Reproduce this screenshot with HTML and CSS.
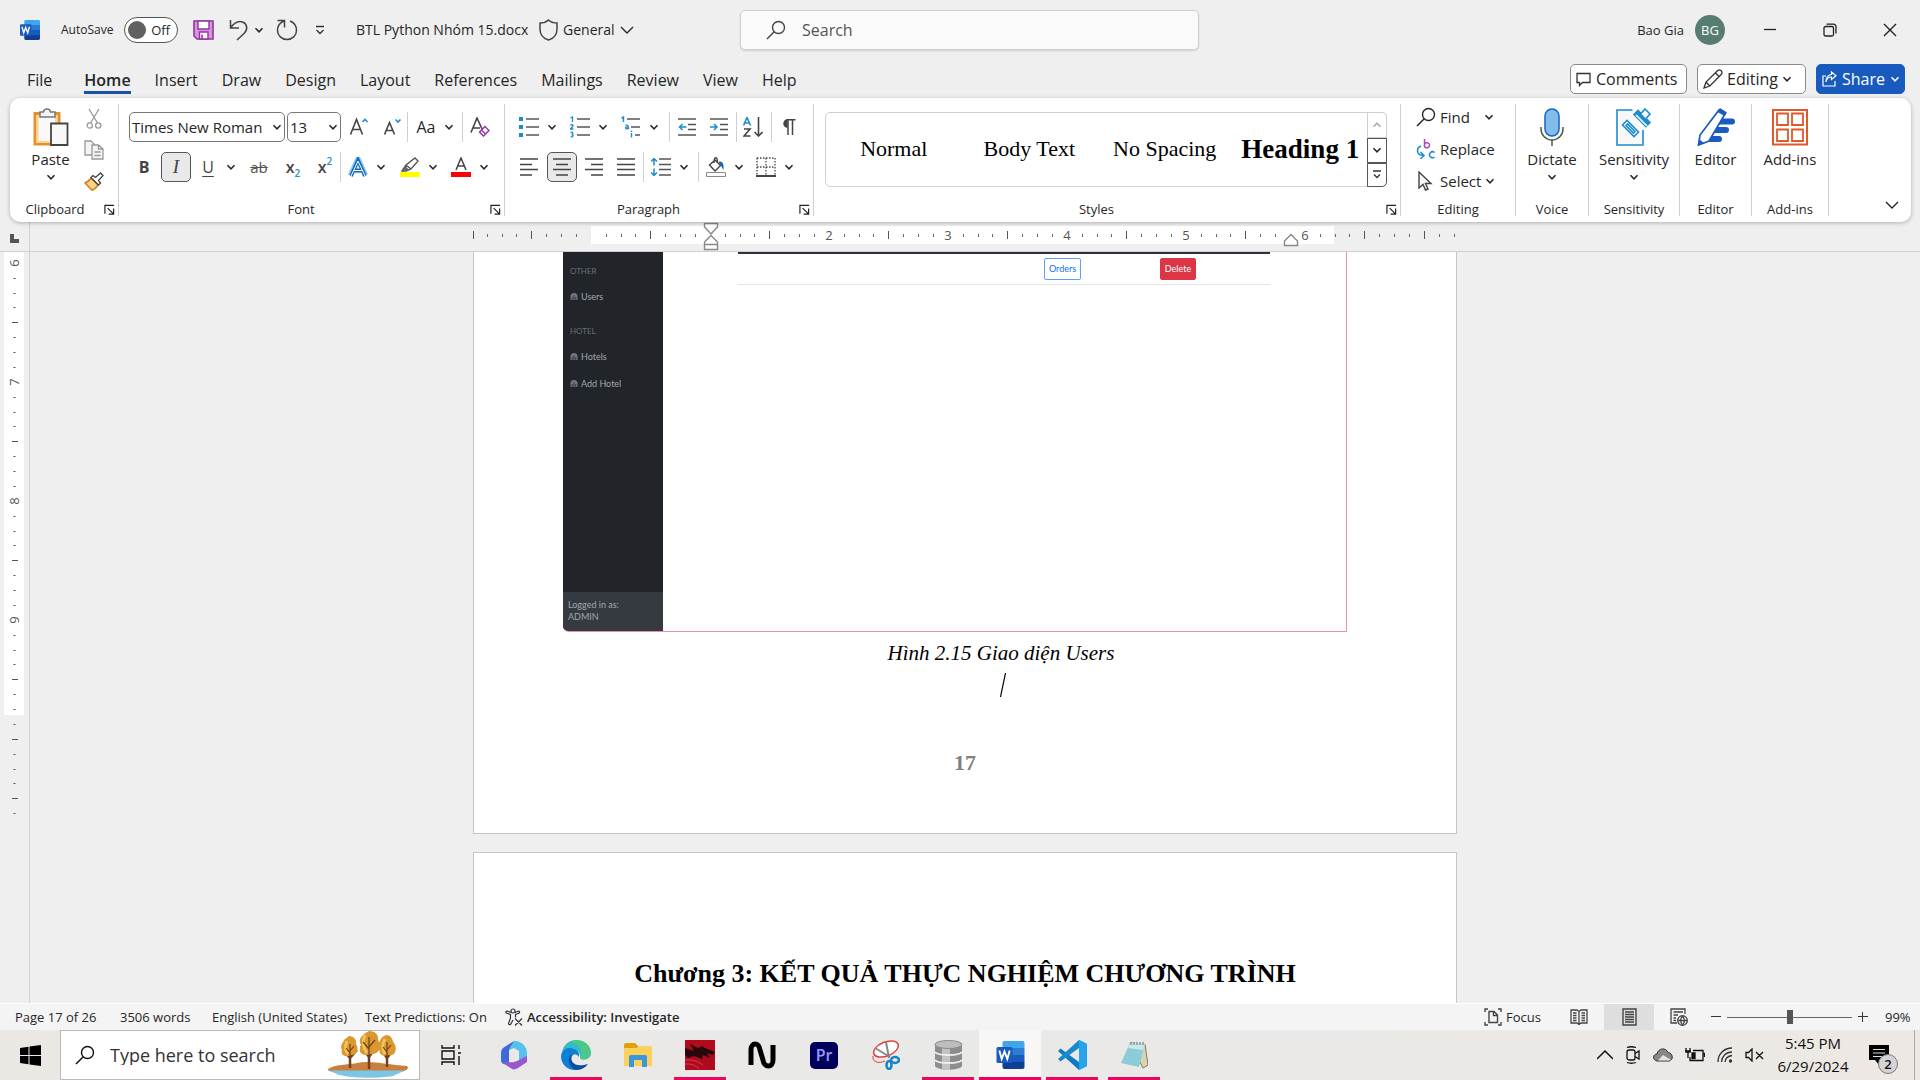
FILE: index.html
```html
<!DOCTYPE html>
<html lang="en">
<head>
<meta charset="utf-8">
<title>BTL Python Nhóm 15.docx - Word</title>
<link rel="stylesheet" href="styles.css">
</head>
<body>
<svg class="defs" aria-hidden="true">
  <defs>
    <symbol id="chev" viewBox="0 0 10 10"><path d="M1.5 3.2 5 6.8 8.500 3.200" fill="none" stroke="currentColor" stroke-width="1.500"/></symbol>
    <symbol id="chev-lg" viewBox="0 0 14 14"><path d="M1 4 7 10 13 4" fill="none" stroke="currentColor" stroke-width="1.400"/></symbol>
    <symbol id="launch" viewBox="0 0 12 12"><path d="M1 10.500V1.500H11M4 4.500 10 10.500M10.500 5V11H5" fill="none" stroke="#222" stroke-width="1.300"/></symbol>
    <symbol id="word" viewBox="0 0 28 28">
      <path d="M8 0H26a2 2 0 0 1 2 2V7H6V2A2 2 0 0 1 8 0Z" fill="#41a5ee"/>
      <path d="M6 7H28V14H6Z" fill="#2b7cd3"/><path d="M6 14H28V21H6Z" fill="#185abd"/>
      <path d="M6 21H28V26a2 2 0 0 1-2 2H8a2 2 0 0 1-2-2Z" fill="#103f91"/>
      <rect y="6" width="16" height="16" rx="1.500" fill="#1a5bc0"/>
      <path d="M2.800 9.500 5.200 18 8 10.500 10.800 18 13.200 9.500" fill="none" stroke="#fff" stroke-width="1.900"/>
    </symbol>
    <symbol id="lens" viewBox="0 0 20 20"><circle cx="12.500" cy="7.500" r="6" fill="none" stroke="currentColor" stroke-width="1.400"/><path d="M8.200 11.800 1 19" stroke="currentColor" stroke-width="1.500"/></symbol>
    <symbol id="lock" viewBox="0 0 8 9"><path d="M0 8V4a4 4 0 0 1 8 0V8Z" fill="#70767c"/><path d="M2 8V4.500M4 8V2.500M6 8V4.500" stroke="#31363b"/></symbol>
  </defs>
</svg>

<header class="titlebar">
  <div class="title-left">
    <svg class="i20" aria-hidden="true"><use href="#word"/></svg>
    <label class="autosave">AutoSave <span class="toggle"><input type="checkbox"><span>Off</span></span></label>
    <button class="bare save" aria-label="Save"><svg width="21" height="20" viewBox="0 0 21 20"><path d="M1 1H20V19H4L1 16Z" fill="#d896dc" stroke="#9434a0" stroke-width="1.600"/><path d="M5 1H16V9H5ZM6.500 12H15V19H6.500Z" fill="#fff" stroke="#9434a0" stroke-width="1.400"/><path d="M9 14.500V19" stroke="#9434a0" stroke-width="1.600"/></svg></button>
    <button class="bare undo" aria-label="Undo"><svg width="20" height="22" viewBox="0 0 20 22" fill="none" stroke="#444" stroke-width="1.500"><path d="M1.500 1V9H10M1.500 9C5 4 9 1.500 13.500 3S19.500 10 15 14.500L8 21"/></svg><svg class="chev"><use href="#chev"/></svg></button>
    <button class="bare redo" aria-label="Repeat"><svg width="22" height="22" viewBox="0 0 22 22" fill="none" stroke="#444" stroke-width="1.500"><path d="M1.500 1.500H8.500V8.500M8.500 2C4 3.500 1.500 7 1.500 11.500a9.500 9 0 0 0 19 0C20.500 7 18 3.500 14 2"/></svg></button>
    <button class="bare qat" aria-label="Customize Quick Access Toolbar"><svg width="10" height="10" viewBox="0 0 10 10" fill="none" stroke="#333" stroke-width="1.300"><path d="M1 1.500H9M1.500 5 5 8.500 8.500 5"/></svg></button>
    <span class="docname">BTL Python Nhóm 15.docx</span>
    <button class="bare general"><svg width="19" height="22" viewBox="0 0 19 22"><path d="M9.500 1C12 3.300 15 4 18 4V10C18 15.500 14.500 19.500 9.500 21C4.500 19.500 1 15.500 1 10V4C4 4 7 3.300 9.500 1Z" fill="none" stroke="#444" stroke-width="1.500"/></svg>General<svg class="chev14"><use href="#chev-lg"/></svg></button>
  </div>
  <label class="search"><svg class="i20"><use href="#lens"/></svg><input type="search" placeholder="Search" aria-label="Search"></label>
  <div class="title-right">
    <span>Bao Gia</span><span class="avatar">BG</span>
    <button class="bare win" aria-label="Minimize"><svg width="14" height="14"><path d="M1 6.500H13" stroke="#222" stroke-width="1.300"/></svg></button>
    <button class="bare win" aria-label="Restore"><svg width="14" height="14" fill="none" stroke="#222" stroke-width="1.300"><rect x="1" y="3.500" width="9.500" height="9.500" rx="1.500"/><path d="M3.500 1.200H10.500a2.500 2.500 0 0 1 2.500 2.500V10.500"/></svg></button>
    <button class="bare win" aria-label="Close"><svg width="14" height="14"><path d="M1 1 13 13M13 1 1 13" stroke="#222" stroke-width="1.400"/></svg></button>
  </div>
</header>

<nav class="tabs">
  <a href="#file" class="tab file">File</a><a href="#home" class="tab on">Home</a><a href="#insert" class="tab">Insert</a><a href="#draw" class="tab">Draw</a><a href="#design" class="tab">Design</a><a href="#layout" class="tab">Layout</a><a href="#references" class="tab">References</a><a href="#mailings" class="tab">Mailings</a><a href="#review" class="tab">Review</a><a href="#view" class="tab">View</a><a href="#help" class="tab">Help</a>
  <div class="tab-actions">
    <button class="pill comments"><svg width="15" height="15" viewBox="0 0 15 15"><path d="M1 1.500H14V10.500H6.500L3.500 13.500V10.500H1Z" fill="none" stroke="#333" stroke-width="1.300"/></svg>Comments</button>
    <button class="pill editing"><svg width="20" height="20" viewBox="0 0 20 20"><path d="M1 19 3 13 14.500 1.800a2.500 2.500 0 0 1 3.700 3.700L6.800 17ZM12.500 4 16 7.500M3 13 6.800 17" fill="none" stroke="#333" stroke-width="1.300"/></svg>Editing<svg class="chev"><use href="#chev"/></svg></button>
    <button class="pill share"><svg width="15" height="16" viewBox="0 0 15 16"><path d="M4 5H1V15H13V10M4 11C4.500 7.500 7 6 9.500 6V8.500L14 4.800 9.500 1V3.500C6 4 4 6.500 4 11Z" fill="none" stroke="#fff" stroke-width="1.200"/></svg>Share<svg class="chev"><use href="#chev"/></svg></button>
  </div>
</nav>

<section class="ribbon" aria-label="Home ribbon">
  <div class="group g-clip">
    <div class="clip-body">
      <button class="bare big"><svg width="36" height="38" viewBox="0 0 36 38"><path d="M2 5.500H26V36H2Z" fill="#fff" stroke="#e8902e" stroke-width="3"/><path d="M4.500 8H23V34H4.500Z" fill="#f9f9f9" stroke="#fbd58a" stroke-width="2"/><path d="M7 9V4H10.500C11 0 17 0 17.500 4H22V9Z" fill="#f4f4f4" stroke="#777" stroke-width="1.500"/><path d="M18 15.500H34.500V37H18Z" fill="#f8f8f8" stroke="#444" stroke-width="1.800"/></svg><span>Paste</span><svg class="chev"><use href="#chev"/></svg></button>
      <div class="clip-side">
        <button class="tool" aria-label="Cut"><svg width="16" height="20" viewBox="0 0 16 20" fill="none" stroke="#999" stroke-width="1.300"><path d="M3 0 11.500 14M13 0 4.500 14"/><circle cx="3.800" cy="16.500" r="2.600"/><circle cx="12.200" cy="16.500" r="2.600"/></svg></button>
        <button class="tool" aria-label="Copy"><svg width="20" height="20" viewBox="0 0 20 20" fill="#f4f4f4" stroke="#999" stroke-width="1.300"><path d="M1 1H7L10 4V15H1Z"/><path d="M8 5H14.500L19 9V19H8ZM14.500 5V9H19M10.500 12H16.500M10.500 15.500H16.500"/></svg></button>
        <button class="tool" aria-label="Format Painter"><svg width="20" height="19" viewBox="0 0 20 19"><path d="M7 6 14 13C12.500 15.500 10 17.500 8 18.200L1 11C3.500 10 5.500 8.500 7 6Z" fill="#fbd58a" stroke="#e07a1c" stroke-width="1.600"/><path d="M7 5.500 9 3.500 11.500 5.500 16.500 1 19 3.500 14.500 8.500 16.500 11 14.500 13Z" fill="#fff" stroke="#444" stroke-width="1.300"/></svg></button>
      </div>
    </div>
    <footer><span>Clipboard</span><button class="bare launch" aria-label="Clipboard settings"><svg><use href="#launch"/></svg></button></footer>
  </div>

  <div class="group g-font">
    <div class="rows">
      <div class="row font1">
        <label class="combo"><select aria-label="Font"><option>Times New Roman</option></select><svg class="chev"><use href="#chev"/></svg></label>
        <label class="combo size"><select aria-label="Font size"><option>13</option></select><svg class="chev"><use href="#chev"/></svg></label>
        <button class="tool" aria-label="Grow font"><svg width="20" height="20" viewBox="0 0 20 20" fill="none"><path d="M1.500 17.500 7.500 2.500 13.500 17.500M3.500 12.500H11.500" stroke="#444" stroke-width="1.600"/><path d="M13.500 5 16 2.500 18.500 5" stroke="#1e8bcd" stroke-width="1.600"/></svg></button>
        <button class="tool" aria-label="Shrink font"><svg width="20" height="20" viewBox="0 0 20 20" fill="none"><path d="M2.500 17.500 7.500 5.500 12.500 17.500M4 13.500H11" stroke="#444" stroke-width="1.600"/><path d="M13.500 2.500 16 5 18.500 2.500" stroke="#1e8bcd" stroke-width="1.600"/></svg></button>
        <i class="sep"></i>
        <button class="split case" aria-label="Change case"><span>Aa</span><svg class="chev"><use href="#chev"/></svg></button>
        <i class="sep"></i>
        <button class="tool" aria-label="Clear formatting"><svg width="20" height="20" viewBox="0 0 20 20" fill="none"><path d="M1 15.500 7 1 12 12M3 11H10" stroke="#444" stroke-width="1.600"/><path d="M9.500 15 15 9.500 19 13.500 13.500 19ZM11.500 13 15.500 17" stroke="#9a35a6" stroke-width="1.500"/></svg></button>
      </div>
      <div class="row font2">
        <button class="tool b">B</button>
        <button class="tool it on">I</button>
        <button class="split"><span class="u">U</span><svg class="chev"><use href="#chev"/></svg></button>
        <button class="tool strike"><s>ab</s></button>
        <button class="tool xx" aria-label="Subscript"><span>x</span><sub>2</sub></button>
        <button class="tool xx" aria-label="Superscript"><span>x</span><sup>2</sup></button>
        <i class="sep"></i>
        <button class="split" aria-label="Text effects"><svg width="20" height="20" viewBox="0 0 20 20" fill="none"><path d="M2.500 18.500 10 2 17.500 18.500M5 13.500H15" stroke="#8accf3" stroke-width="5.500"/><path d="M3 19 10 3 17 19M6 13.500H14" stroke="#1466b5" stroke-width="3.400"/><path d="M3 19 10 4 17 19M6 13.500H14" stroke="#fff" stroke-width="1"/></svg><svg class="chev"><use href="#chev"/></svg></button>
        <button class="split" aria-label="Highlight"><svg width="20" height="20" viewBox="0 0 20 20"><path d="M2 14 6 8 15 1 18 4 11 12 6 14ZM6 8 11 12" fill="#fff" stroke="#555" stroke-width="1.400"/><path d="M2 14 5.500 9 9 13Z" fill="#666"/><path d="M0 15H20V20H0Z" fill="#ff0"/></svg><svg class="chev"><use href="#chev"/></svg></button>
        <button class="split" aria-label="Font colour"><svg width="20" height="20" viewBox="0 0 20 20"><path d="M5 13 10 1 15 13M6.500 9H13.500" fill="none" stroke="#444" stroke-width="1.500"/><path d="M0 15H20V20H0Z" fill="red"/></svg><svg class="chev"><use href="#chev"/></svg></button>
      </div>
    </div>
    <footer><span>Font</span><button class="bare launch" aria-label="Font settings"><svg><use href="#launch"/></svg></button></footer>
  </div>

  <div class="group g-para">
    <div class="rows">
      <div class="row para1">
        <button class="split" aria-label="Bullets"><svg width="20" height="20" viewBox="0 0 20 20"><path d="M0 0H4V4H0ZM0 8H4V12H0ZM0 16H4V20H0Z" fill="#1e8bcd"/><path d="M7 2H20M7 10H20M7 18H20" stroke="#555" stroke-width="1.500"/></svg><svg class="chev"><use href="#chev"/></svg></button>
        <button class="split" aria-label="Numbering"><svg width="20" height="22" viewBox="0 0 20 22"><path d="M7 3H20M7 11H20M7 19H20" stroke="#555" stroke-width="1.500"/><path d="M.5 2 2.500 1V6M.5 9.500C1 8 3.500 8.500 3 10L.5 13H3.500M.5 16.500C3.500 15.500 3.500 18 1.500 18.500C4 18.500 3.500 21.500 .5 20.800" fill="none" stroke="#1e8bcd" stroke-width="1.300"/></svg><svg class="chev"><use href="#chev"/></svg></button>
        <button class="split" aria-label="Multilevel list"><svg width="20" height="22" viewBox="0 0 20 22"><path d="M6 3H19M10 11H19M14 19H19" stroke="#555" stroke-width="1.500"/><path d="M.5 2 2.500 1V6M4.500 9.500C7 8.500 7.500 9.500 7.500 13M7.500 11C3.500 10.500 4 14 7.500 12.500M10.500 17V21.500M10.500 14.500V16" fill="none" stroke="#1e8bcd" stroke-width="1.400"/></svg><svg class="chev"><use href="#chev"/></svg></button>
        <i class="sep"></i>
        <button class="tool" aria-label="Decrease indent"><svg width="18" height="18" viewBox="0 0 18 18"><path d="M0 1H18M10 6.500H18M10 11.500H18M0 17H18" stroke="#555" stroke-width="1.500"/><path d="M8.500 9H1.500M4.500 6 1.500 9 4.500 12" fill="none" stroke="#1e8bcd" stroke-width="1.500"/></svg></button>
        <button class="tool" aria-label="Increase indent"><svg width="18" height="18" viewBox="0 0 18 18"><path d="M0 1H18M10 6.500H18M10 11.500H18M0 17H18" stroke="#555" stroke-width="1.500"/><path d="M0 9H7M4 6 7 9 4 12" fill="none" stroke="#1e8bcd" stroke-width="1.500"/></svg></button>
        <i class="sep"></i>
        <button class="tool" aria-label="Sort"><svg width="20" height="20" viewBox="0 0 20 20" fill="none" stroke-width="1.600"><path d="M.5 8.500 4 .5 7.500 8.500M2 6H6.500" stroke="#1e8bcd"/><path d="M1 12H7L1 19H7.500M15.500 0V19M11.500 15 15.500 19 19.500 15" stroke="#444"/></svg></button>
        <i class="sep"></i>
        <button class="tool" aria-label="Show marks"><svg width="14" height="16" viewBox="0 0 14 16"><path d="M6 0H13.500V1.500H5.500V9A4.500 4.500 0 0 1 6 0Z" fill="#444"/><path d="M6 1V16M10.500 1V16" stroke="#444" stroke-width="1.500"/></svg></button>
      </div>
      <div class="row para2">
        <button class="tool" aria-label="Align left"><svg width="18" height="18"><path d="M0 1H18M0 6.500H12M0 11.500H18M0 17H12" stroke="#444" stroke-width="1.500"/></svg></button>
        <button class="tool on" aria-label="Centre"><svg width="18" height="18"><path d="M0 1H18M3 6.500H15M0 11.500H18M3 17H15" stroke="#444" stroke-width="1.500"/></svg></button>
        <button class="tool" aria-label="Align right"><svg width="18" height="18"><path d="M0 1H18M6 6.500H18M0 11.500H18M6 17H18" stroke="#444" stroke-width="1.500"/></svg></button>
        <button class="tool" aria-label="Justify"><svg width="18" height="18"><path d="M0 1H18M0 6.500H18M0 11.500H18M0 17H18" stroke="#444" stroke-width="1.500"/></svg></button>
        <i class="sep"></i>
        <button class="split" aria-label="Line spacing"><svg width="20" height="18" viewBox="0 0 20 18"><path d="M8 1H20M8 6.500H20M8 11.500H20M8 17H20" stroke="#555" stroke-width="1.500"/><path d="M3 0V7.500M0 3.500 3 .5 6 3.500M3 10.500V18M0 14.500 3 17.500 6 14.500" fill="none" stroke="#1e8bcd" stroke-width="1.500"/></svg><svg class="chev"><use href="#chev"/></svg></button>
        <i class="sep"></i>
        <button class="split" aria-label="Shading"><svg width="20" height="20" viewBox="0 0 20 20"><path d="M3.500 8 9 3 14.500 8.500 9 14ZM8 6C8-1 11.500-1 11.500 6" fill="#fff" stroke="#444" stroke-width="1.400"/><path d="M13 4.500C17 4.500 18 7 17.500 13 15.500 10.500 15.500 8.500 13 6Z" fill="#1466b5"/><path d="M.5 15.500H19.500V19.500H.5Z" fill="#fff" stroke="#888"/></svg><svg class="chev"><use href="#chev"/></svg></button>
        <button class="split" aria-label="Borders"><svg width="20" height="20" viewBox="0 0 20 20"><path d="M1 1H19M1 1V18M19 1V18M10 1V18M1 10H19" stroke="#444" stroke-width="1.300" stroke-dasharray="1.500 1.500"/><path d="M0 19H20" stroke="#444" stroke-width="2"/></svg><svg class="chev"><use href="#chev"/></svg></button>
      </div>
    </div>
    <footer><span>Paragraph</span><button class="bare launch" aria-label="Paragraph settings"><svg><use href="#launch"/></svg></button></footer>
  </div>

  <div class="group g-styles">
    <div class="rows">
      <div class="gallery">
        <button class="style">Normal</button><button class="style">Body Text</button><button class="style">No Spacing</button><button class="style h1">Heading 1</button>
        <div class="spin">
          <button class="off" aria-label="Previous styles"><svg class="chev flip"><use href="#chev"/></svg></button>
          <button aria-label="Next styles"><svg class="chev"><use href="#chev"/></svg></button>
          <button aria-label="More styles"><svg width="10" height="10" viewBox="0 0 10 10" fill="none" stroke="#333" stroke-width="1.300"><path d="M1 1H9M2 4.500 5 7.500 8 4.500"/></svg></button>
        </div>
      </div>
    </div>
    <footer><span>Styles</span><button class="bare launch" aria-label="Styles settings"><svg><use href="#launch"/></svg></button></footer>
  </div>

  <div class="group g-edit">
    <div class="edit-list">
      <button class="bare"><svg class="i20"><use href="#lens"/></svg><span class="find">Find</span><svg class="chev"><use href="#chev"/></svg></button>
      <button class="bare"><svg width="20" height="20" viewBox="0 0 20 20" fill="none" stroke-width="1.500"><path d="M8.500 0V8.500M8.500 5.500A2.600 2.600 0 1 1 8.500 7" stroke="#b146c2"/><path d="M18.500 13.500A3 3 0 1 0 18.500 18M5 7C0 9 0 16 7.500 16.500M4.500 13 8 16.500 4.500 20" stroke="#1e8bcd"/></svg><span>Replace</span></button>
      <button class="bare"><svg width="20" height="20" viewBox="0 0 20 20"><path d="M3 1V17L7 13.500 9.500 19 12 18 9.500 12.500H15Z" fill="#f6f6f6" stroke="#444" stroke-width="1.400"/></svg><span>Select</span><svg class="chev"><use href="#chev"/></svg></button>
    </div>
    <footer><span>Editing</span></footer>
  </div>
  <div class="group g-voice">
    <button class="bare big"><svg width="24" height="38" viewBox="0 0 24 38"><rect x="5" y="1" width="14" height="27" rx="7" fill="#83bdec" stroke="#1466b5" stroke-width="1.500"/><path d="M1 19V21a11 11 0 0 0 22 0V19M12 32V38" fill="none" stroke="#555" stroke-width="1.500"/></svg><span>Dictate</span><svg class="chev"><use href="#chev"/></svg></button>
    <footer><span>Voice</span></footer>
  </div>
  <div class="group g-sens">
    <button class="bare big"><svg width="36" height="38" viewBox="0 0 36 38" fill="#fff" stroke="#1e8bcd" stroke-width="1.600"><path d="M1 2H27V37H1Z" fill="#f8f8f8"/><path d="M16 1H36V22H26Z" stroke="none"/><path d="M6.500 17 11 12.500 22.500 24 18 28.500ZM10 17.500 11.500 16 19 23.500 17.500 25Z"/><path d="M18 6.500 22 2.500 34 14.500 30 18.500Z" fill="#1e8bcd"/><path d="M20 7 31 18" stroke="#fff"/><path d="M25 5.500 29 1 34 6 30 10.500" /></svg><span>Sensitivity</span><svg class="chev"><use href="#chev"/></svg></button>
    <footer><span>Sensitivity</span></footer>
  </div>
  <div class="group g-editor">
    <button class="bare big"><svg width="38" height="38" viewBox="0 0 38 38"><path d="M21 13.500H35M16 22H29M11 31H22" stroke="#1a5bc0" stroke-width="6" stroke-linecap="round"/><path d="M22 2 28 6 12 33 1.500 37 3 27Z" fill="#fff" stroke="#1a5bc0" stroke-width="1.700"/><path d="M23 0 30 4.500 27.500 8 20.500 4ZM1 38 2 31 7 35Z" fill="#1a5bc0"/></svg><span>Editor</span></button>
    <footer><span>Editor</span></footer>
  </div>
  <div class="group g-addins">
    <button class="bare big"><svg width="36" height="38" viewBox="0 0 36 38" fill="#fff" stroke="#e0592a"><path d="M1 2H35V36.500H1Z" stroke-width="2"/><path d="M5 5.500H16V17H5ZM20 5.500H31V17H20ZM5 21.500H16V33H5ZM20 21.500H31V33H20Z" stroke-width="1.800"/></svg><span>Add-ins</span></button>
    <footer><span>Add-ins</span></footer>
  </div>
  <div class="tail"><button class="bare" aria-label="Collapse ribbon"><svg class="chev14"><use href="#chev-lg"/></svg></button></div>
</section>

<main class="workspace">
  <div class="corner"><svg width="9" height="9"><path d="M0 0H4V5H9V9H0Z" fill="#555"/></svg></div>
  <div class="hruler">
    <svg class="hticks" viewBox="0 0 984 29" width="984" height="29">
      <defs><pattern id="pt" patternUnits="userSpaceOnUse" x="118" y="0" width="119" height="29">
        <path d="M15.500 12V15M30.500 12V15M44.500 12V15M74.500 12V15M89.500 12V15M104.500 12V15" stroke="#666"/><path d="M59.500 9V17" stroke="#555"/></pattern></defs>
      <rect x="118" y="4" width="743" height="18" fill="#fff"/>
      <rect width="984" height="29" fill="url(#pt)"/>
      <path d="M.5 9V17M951.500 9V17" stroke="#555"/>
      <g class="num"><text x="356" y="18">2</text><text x="475" y="18">3</text><text x="594" y="18">4</text><text x="713" y="18">5</text><text x="832" y="18">6</text></g>
      <path d="M231.500 1.500H244.500V5L238 12 231.500 5ZM231.500 27.500V20L238 13.500 244.500 20V27.500ZM231.500 22.500H244.500M811.500 23.500V19L818 12.500 824.500 19V23.500Z" fill="#fff" stroke="#888" stroke-width="1.400"/>
    </svg>
  </div>
  <div class="vruler">
    <svg viewBox="0 0 20 576" width="20" height="576">
      <defs><pattern id="pv" patternUnits="userSpaceOnUse" x="0" y="11" width="20" height="119">
        <path d="M9.500 15.500H11.500M9.500 30.500H11.500M9.500 44.500H11.500M9.500 74.500H11.500M9.500 89.500H11.500M9.500 104.500H11.500" stroke="#555"/><path d="M8 59.500H14" stroke="#555"/></pattern></defs>
      <rect width="20" height="463" fill="#fff"/>
      <rect y="18" width="20" height="558" fill="url(#pv)"/>
      <path d="M8 487.500H14" stroke="#555"/>
      <g class="num"><text transform="translate(15 11) rotate(-90)">6</text><text transform="translate(15 130) rotate(-90)">7</text><text transform="translate(15 249) rotate(-90)">8</text><text transform="translate(15 368) rotate(-90)">9</text></g>
    </svg>
  </div>
  <div class="canvas">
    <article class="page first">
      <figure>
        <div class="shot">
          <aside>
            <h6>OTHER</h6>
            <p><svg><use href="#lock"/></svg>Users</p>
            <h6 class="next">HOTEL</h6>
            <p><svg><use href="#lock"/></svg>Hotels</p>
            <p><svg><use href="#lock"/></svg>Add Hotel</p>
            <div class="who">Logged in as:<br>ADMIN</div>
          </aside>
          <div class="shot-row"><span class="orders">Orders</span><span class="delete">Delete</span></div>
        </div>
        <figcaption>Hình 2.15 Giao diện Users</figcaption>
      </figure>
      <svg class="caret" width="6" height="24" aria-hidden="true"><path d="M5.500 0 .5 24" stroke="#000" stroke-width="1.200"/></svg>
      <div class="pageno">17</div>
    </article>
    <article class="page second"><h1>Chương 3: KẾT QUẢ THỰC NGHIỆM CHƯƠNG TRÌNH</h1></article>
  </div>
</main>

<footer class="status">
  <div class="status-left">
    <span>Page 17 of 26</span><span>3506 words</span><span>English (United States)</span><span>Text Predictions: On</span>
    <button class="bare access"><svg width="18" height="18" viewBox="0 0 18 18" fill="none" stroke="#333" stroke-width="1.200"><circle cx="8" cy="3" r="2"/><path d="M6 4.500 2 3C.5 3 .5 5 2 5.300L5.500 6.500V10L3.500 15.500C3.500 17 5.500 17 5.800 16L8 12M10 4.500 13.500 3C15 3 15 5 13.500 5.300L10.500 6.500V9.500M10 10.500 17 17.500M17 10.500 10 17.500"/></svg>Accessibility: Investigate</button>
  </div>
  <div class="status-right">
    <button class="bare focus"><svg width="18" height="18" viewBox="0 0 18 18" fill="none" stroke="#444" stroke-width="1.400"><path d="M4 1H1V4M14 1H17V4M4 17H1V14M14 17H17V14M5 3.500H10L13.500 7V14.500H5ZM9.500 3.500V7.500H13.500"/></svg>Focus</button>
    <button class="bare view" aria-label="Read mode"><svg width="18" height="16" viewBox="0 0 18 16" fill="none" stroke="#444" stroke-width="1.300"><path d="M1 1H7L9 2.500 11 1H17V14H11L9 15.500 7 14H1ZM9 2.500V15M3 4H6.500M3 6.500H6.500M3 9H6.500M3 11.500H6.500M11.500 4H15M11.500 6.500H15M11.500 9H15M11.500 11.500H15"/></svg></button>
    <button class="bare view on" aria-label="Print layout"><svg width="15" height="18" viewBox="0 0 15 18" fill="none" stroke="#444" stroke-width="1.400"><path d="M1 1H14V17H1ZM3 4H12M3 6.500H12M3 9H12M3 11.500H12M3 14H12"/></svg></button>
    <button class="bare view" aria-label="Web layout"><svg width="18" height="18" viewBox="0 0 18 18" fill="none" stroke="#444" stroke-width="1.300"><path d="M7 15H1V1H15V6M3.500 4H13M3.500 7H8M3.500 10H6M3.500 12.500H6"/><circle cx="12.500" cy="12.500" r="4.800"/><path d="M8 12.500H17M12.500 8C10 11 10 14 12.500 17C15 14 15 11 12.500 8"/></svg></button>
    <button class="bare zoom" aria-label="Zoom out"><svg width="10" height="10"><path d="M0 4.500H10" stroke="#333"/></svg></button>
    <input class="slider" type="range" min="0" max="100" value="50" aria-label="Zoom">
    <button class="bare zoom" aria-label="Zoom in"><svg width="10" height="10"><path d="M0 4.500H10M4.500 0V10" stroke="#333"/></svg></button>
    <span class="pct">99%</span>
  </div>
</footer>

<footer class="taskbar">
  <button class="bare start" aria-label="Start"><svg width="21" height="21" viewBox="0 0 21 21"><path d="M0 3 8.500 1.800V10H0ZM9.500 1.600 21 0V10H9.500ZM0 11H8.500V19.200L0 18ZM9.500 11H21V21L9.500 19.400Z"/></svg></button>
  <label class="tasksearch"><svg class="i20"><use href="#lens"/></svg><input type="search" placeholder="Type here to search" aria-label="Type here to search">
    <svg width="82" height="48" viewBox="0 0 82 48" aria-hidden="true"><path d="M1 38C8 33 20 34 30 32C44 29 60 34 80 35C83 38 78 41 70 41H10C4 41 0 40 1 38Z" fill="#c97f3d"/><path d="M2 39.500H78L66 45C50 48 25 47 12 44Z" fill="#7cc6e4"/><path d="M23 37V18M23 27 16 19M23 27 30 19M42 38V10M42 26 34 15M42 26 50 14M60 36V18M60 27 54 18M60 27 66 19" stroke="#75401e" stroke-width="2.500" fill="none"/><path d="M22 5C27 5 30 9 29 13 33 18 29 25 24 24 19 27 13 24 15 19 12 14 17 11 17 9ZM42 0C49 0 52 5 51 9 56 15 52 24 44 23 36 26 30 22 34 14 30 8 36 3 42 0ZM60 4C66 5 65 10 67 12 71 18 68 26 61 24 54 27 51 21 53 16 51 11 54 5 60 4Z" fill="#d9992e"/><path d="M20 10C18 15 18 20 21 23M38 4C35 10 36 17 40 22M58 8C55 13 55 19 58 23" stroke="#f1c25d" stroke-width="3" fill="none"/><path d="M23 30V13M23 22 19 17M23 20 27 15M42 30V6M42 18 36 11M42 16 48 9M60 30V11M60 21 56 16M60 19 64 14" stroke="#75401e" stroke-width="1.200" fill="none"/></svg>
  </label>
  <button class="bare taskview" aria-label="Task view"><svg width="20" height="20" viewBox="0 0 20 20" fill="none" stroke="#111" stroke-width="1.400"><path d="M1 0V3H13V0M1 6H13V14H1ZM1 20V17H13V20M18 0V4M18 11V20M17 8H20" /></svg></button>
  <div class="apps">
    <button class="app" aria-label="Microsoft 365"><svg width="28" height="30" viewBox="0 0 28 30"><path d="M14 1 3 8C1 10 1 12 1 14V21C2 25 6 25 9 23V11L19 4Z" fill="#3f6bd8"/><path d="M14 1C20 0 27 6 27 12V19L19 24V11L9 9Z" fill="#55c1ec"/><path d="M3 23 12 29C14 30 16 29 18 28L27 22V16L17 21C13 23 10 22 8 22Z" fill="#9a56cf"/><path d="M9 10 14 8 19 11V18L14 21 9 18Z" fill="#e9e8e6"/></svg></button>
    <button class="app run" aria-label="Edge"><svg width="30" height="30" viewBox="0 0 30 30"><path d="M1 13C2 5 8 0 15 0C24 0 30 6 30 13C30 20 21 21 19 18C20 15 18 9 11 9C6 9 2 11 1 13Z" fill="#33b9c8"/><path d="M15 0C24 0 30 6 30 13C30 20 21 21 19 18C23 14 20 4 9 2Z" fill="#5ed35d" opacity=".6"/><path d="M0 16C1 9 7 7 11 8.500C17 9 19 14 18 17C14 10 6 17 13 26C15 29 18 30 14 30C6 30 0 24 0 16Z" fill="#0c7fd6"/><path d="M11 14C8 22 14 28 27 24C24 28 20 30 15 30C8 28 5 18 11 14Z" fill="#0b4f9e"/></svg></button>
    <button class="app" aria-label="File Explorer"><svg width="28" height="24" viewBox="0 0 28 24"><path d="M0 2A2 2 0 0 1 2 0H11L14 3V8H0Z" fill="#e0a010"/><path d="M0 5H13L15 3H26A2 2 0 0 1 28 5V23H0Z" fill="#fcd15b"/><path d="M5 14A2 2 0 0 1 7 12H21A2 2 0 0 1 23 14V24H18V17H10V24H5Z" fill="#3c96dc"/></svg></button>
    <button class="app run" aria-label="Dragon"><svg width="30" height="30" viewBox="0 0 30 30"><path d="M0 0H30V30H0Z" fill="#b00a1c"/><path d="M0 8 9 11 5 4 13 8 17 6 20 8 30 12 28 15 22 13 25 18 18 15 17 19 9 16 3 18 0 15Z" fill="#26080c"/><path d="M0 20Q10 19 18 25M0 24Q9 23 14 29" stroke="#d53a5b" fill="none"/></svg></button>
    <button class="app" aria-label="N"><svg width="28" height="28" viewBox="0 0 28 28"><path d="M3 24V9C3 1 11 1 12 9L15 19C16 27 25 27 25 19V4" fill="none" stroke="#000" stroke-width="5"/></svg></button>
    <button class="app" aria-label="Premiere Pro"><span class="pr">Pr</span></button>
    <button class="app" aria-label="Snipping Tool"><svg width="28" height="30" viewBox="0 0 28 30" fill="none"><ellipse cx="14" cy="9" rx="13" ry="7" transform="rotate(-22 14 9)" fill="#fff" stroke="#e2403f" stroke-width="1.500"/><path d="M1 16C0 22 6 24 13 21" stroke="#e2403f"/><path d="M3 8 18 17M14 2 17 18" stroke="#888" stroke-width="2"/><ellipse cx="23" cy="20" rx="4" ry="3" stroke="#1783c9" stroke-width="2.500"/><ellipse cx="17" cy="25" rx="2.500" ry="4" stroke="#1783c9" stroke-width="2.500"/></svg></button>
    <button class="app run" aria-label="Database"><svg width="29" height="30" viewBox="0 0 29 30"><path d="M1 4V26C4 31 25 31 28 26V4Z" fill="#8d8d8d"/><path d="M8 4H16V30H8Z" fill="#c4c4c4"/><ellipse cx="14.500" cy="4.500" rx="13.500" ry="4" fill="#bdbdbd" stroke="#8a8a8a"/><path d="M1 12C4 16 25 16 28 12M1 20C4 24 25 24 28 20" stroke="#eee" stroke-width="2" fill="none"/></svg></button>
    <button class="app run cur" aria-label="Word"><svg width="29" height="28"><use href="#word"/></svg></button>
    <button class="app run" aria-label="Visual Studio Code"><svg width="30" height="30" viewBox="0 0 30 30"><path d="M22 0 30 4V26L22 30 1 11 3.500 8.500 22 22Z" fill="#0d7cc4"/><path d="M22 0V8L3.500 21.500 1 19Z" fill="#1a8ad0"/><path d="M22 0 30 4V26L22 30Z" fill="#26a5ee"/></svg></button>
    <button class="app run" aria-label="Notepad"><svg width="28" height="28" viewBox="0 0 28 28"><path d="M10 2 25 3 28 24 23 27Z" fill="#d8d2b8" stroke="#8a7a55"/><path d="M10 2H25L19 26 1 22Z" fill="#8ccbd8"/><path d="M10 2H25L23 9 8 7Z" fill="#c8e9ee"/><path d="M11 1V4M14 1V4M17 1V4M20 1V4M23 1V4" stroke="#666"/></svg></button>
  </div>
  <div class="tray">
    <svg width="16" height="10"><path d="M0 9 8 1 16 9" fill="none" stroke="#111" stroke-width="1.500"/></svg>
    <svg width="16" height="18" viewBox="0 0 16 18" fill="none" stroke="#111" stroke-width="1.300"><rect x="2" y="4" width="8" height="10" rx="2"/><path d="M10 7.500 14 5V13L10 10.500M2 1.500Q6 0 11 1.500M2 16.500Q6 18 11 16.500"/></svg>
    <svg width="20" height="14" viewBox="0 0 20 14"><path d="M4 13C-1 12 0 6 4 6C5 0 13-1 15 4.500C20 5 21 12 16 13Z" fill="#888" stroke="#333"/><path d="M5 12.500 10 7 18 12 16 12.500Z" fill="#e4e4e4"/></svg>
    <svg width="20" height="14" viewBox="0 0 20 14" fill="none" stroke="#111" stroke-width="1.300"><path d="M8 2.500H18V12.500H5V9M18.500 5.500H19.500V9M1 0V4H5V0M0 3H6M3 4V10"/><path d="M7 5H10V10.500H7Z" fill="#111"/></svg>
    <svg width="16" height="16" viewBox="0 0 16 16" fill="none" stroke="#333" stroke-width="1.300"><path d="M1 15C1 7 7 1 15 1M4.500 15C5 9 9 5 15 5M8 15C8.500 11.500 11 9 15 8.500"/><circle cx="13.500" cy="14" r="1" fill="#111"/></svg>
    <svg width="19" height="14" viewBox="0 0 19 14" fill="none" stroke="#111" stroke-width="1.300"><path d="M1 4.500H3.500L7 1V13L3.500 9.500H1ZM11 4 18 11M18 4 11 11"/></svg>
    <time>5:45 PM<br>6/29/2024</time>
    <button class="bare note" aria-label="Notifications"><svg width="20" height="20"><path d="M0 0H20V15H10V20L6 15H0Z"/><path d="M4 4.500H16M4 8H16M4 11.500H16" stroke="#ddd"/></svg><span>2</span></button>
  </div>
</footer>
</body>
</html>
```
FILE: styles.css
```css
* { box-sizing: border-box; }
body {
  margin: 0;
  height: 100vh;
  display: flex;
  flex-direction: column;
  overflow: hidden;
  background: #efefef;
  color: #262626;
  font: 14px/20px "Open Sans", "Noto Sans", sans-serif;
}
.defs { position: absolute; width: 0; height: 0; }
button, input, select { font: inherit; color: inherit; margin: 0; }
button { padding: 0; cursor: default; }
a { color: inherit; text-decoration: none; }
svg { flex: none; display: block; }
.bare { border: 0; background: none; display: flex; align-items: center; justify-content: center; }
.i20 { width: 20px; height: 20px; }
.chev { width: 10px; height: 10px; }
.chev14 { width: 14px; height: 14px; }
.flip { transform: scaleY(-1); }

/* Title bar */
.titlebar { height: 60px; display: grid; grid-template-columns: 740px 1fr 721px; align-items: center; }
.title-left { display: flex; align-items: center; padding-left: 20px; }
.autosave { flex: none; display: flex; align-items: center; justify-content: space-between; width: 117px; margin-left: 21px; font-size: 12px; }
.toggle { flex: none; position: relative; display: flex; width: 54px; height: 26px; align-items: center; justify-content: flex-end; padding-right: 7px; border: 1px solid #555; border-radius: 13px; background: #fff; font-size: 13px; }
.toggle input { position: absolute; left: 3px; top: 3px; appearance: none; width: 18px; height: 18px; border-radius: 50%; background: #616161; }
.save { margin-left: 15px; width: 21px; }
.undo { gap: 5px; margin-left: 15px; }
.redo { width: 22px; margin-left: 12px; margin-right: 16px; }
.qat { width: 12px; margin-right: 30px; }
.docname { width: 183px; white-space: nowrap; }
.general { gap: 5px; }
.search { display: flex; align-items: center; height: 40px; padding-left: 25px; gap: 16px; border: 1px solid #cfcfcf; border-radius: 5px; background: #fafafa; color: #444; box-shadow: 0 1px 2px #0002; }
.search input, .tasksearch input { flex: 1; min-width: 0; border: 0; padding: 0; background: none; outline: 0; font-size: 16px; }
.search input::placeholder { color: #555; opacity: 1; }
.title-right { display: flex; align-items: center; justify-content: flex-end; font-size: 13px; }
.avatar { width: 30px; height: 30px; margin: 0 15px 0 11px; border-radius: 50%; background: #577d72; color: #fff; text-align: center; line-height: 30px; }
.win { width: 60px; height: 40px; }

/* Tabs */
.tabs { height: 38px; display: flex; align-items: stretch; padding-left: 15px; font-size: 16px; }
.tab { display: flex; align-items: center; padding: 8px 0 0; margin: 0 12px; border-bottom: 3px solid transparent; height: 34px; }
.tab.file { margin-right: 20px; }
.tab.on { font-weight: 600; border-color: #1a4fae; }
.tab-actions { display: flex; gap: 10px; margin: 4px 15px 0 auto; height: 30px; }
.pill { display: flex; align-items: center; gap: 5px; padding: 0 5px; border: 1px solid #8a8a8a; border-radius: 5px; background: #fff; font-size: 16px; }
.comments { width: 117px; }
.editing { width: 109px; gap: 4px; }
.share { width: 89px; border-color: #185abd; background: #185abd; color: #fff; }

/* Ribbon */
.ribbon { display: flex; height: 124px; margin: 0 9px 0 10px; padding: 6px 0; border-radius: 10px; background: #fff; box-shadow: 0 1px 4px #0004; position: relative; z-index: 1; }
.group { display: grid; grid-template-rows: 98px 14px; border-right: 1px solid #d0d0d0; }
.group > footer { display: grid; grid-template-columns: 1fr; align-items: center; justify-items: center; font-size: 13px; line-height: 14px; }
.group > footer > * { grid-area: 1 / 1; }
.g-clip { width: 109px; }
.g-clip footer span { margin-right: 18px; }
.g-font { width: 386px; }
.g-font footer span, .g-para footer span, .g-styles footer span { margin-right: 21px; }
.g-para { width: 309px; }
.g-styles { flex: 1; }
.g-edit { width: 115px; }
.g-voice { width: 73px; }
.g-sens { width: 91px; }
.g-editor { width: 72px; }
.g-addins { width: 77px; }
.launch { justify-self: end; margin-right: 3px; }
.launch svg { width: 11px; height: 11px; }
.tail { width: 82px; display: flex; align-items: flex-end; justify-content: flex-end; padding: 0 12px 4px; }
.big { flex-direction: column; justify-content: flex-start; padding-top: 4px; font-size: 15px; width: 100%; }
.big span { line-height: 26px; white-space: nowrap; }
.clip-body { display: flex; padding-left: 12px; }
.clip-body .big { width: 57px; }
.clip-side { display: grid; grid-template-rows: 31px 31px 31px; }
.tool { display: flex; align-items: center; justify-content: center; width: 30px; height: 30px; border: 1px solid transparent; border-radius: 5px; background: none; }
.tool.on { border-color: #555; background: #e9e9e9; }
.split { display: grid; grid-template-columns: 30px 16px; width: 46px; height: 30px; padding: 0; border: 0; background: none; align-items: center; justify-items: center; }
.rows { display: grid; grid-template-rows: 30px 30px; row-gap: 10px; padding-top: 8px; }
.row { display: grid; }
.g-font .row { padding-left: 10px; }
.g-para .row { padding-left: 9px; }
.font1 { grid-template-columns: 158px 57px 33px 30px 4px 51px 3px 30px; }
.font2 { grid-template-columns: 32px 32px 51px 34px 32px 30px 3px 52px 51px 46px; }
.para1 { grid-template-columns: 51px 51px 53px 3px 32px 32px 2px 33px 3px 30px; }
.para2 { grid-template-columns: 33px 32px 32px 32px 3px 52px 3px 50px 46px; }
.sep { width: 1px; background: #cfcfcf; }
.combo { display: grid; width: 156px; align-items: center; border: 1px solid #777; border-radius: 5px; font-size: 15px; }
.combo > * { grid-area: 1 / 1; }
.combo select { appearance: none; width: 100%; border: 0; padding: 0 0 0 2px; background: none; }
.combo .chev { justify-self: end; margin-right: 2px; pointer-events: none; }
.combo.size { width: 54px; }
.case { font-size: 16px; }
.b { font-weight: 700; font-size: 16px; color: #444; }
.it { font: italic 19px/20px "Liberation Serif", serif; color: #444; }
.u { font-size: 16px; text-decoration: underline; text-underline-offset: 3px; color: #444; }
.strike { font-size: 15px; color: #555; }
.xx { font-size: 16px; font-weight: 600; color: #444; }
.xx sub, .xx sup { font-size: 10px; color: #1e8bcd; line-height: 10px; }
.xx sub { padding-top: 12px; }
.xx sup { padding-bottom: 12px; }
.gallery { grid-row: 1 / 3; display: flex; height: 75px; margin: 0 13px 0 11px; border: 1px solid #cfcfcf; border-radius: 5px; }
.style { flex: 1; border: 0; background: none; font: 22px/26px "Liberation Serif", serif; color: #000; white-space: nowrap; padding: 0 0 2px; }
.style.h1 { font-size: 27px; font-weight: 700; }
.spin { display: grid; width: 20px; margin: -1px; grid-template-rows: 26px 1fr 1fr; }
.spin button { display: flex; align-items: center; justify-content: center; border: 1px solid #555; background: #fff; }
.spin .off { border-color: #cfcfcf; color: #aaa; border-radius: 0 5px 0 0; }
.spin button:last-child { border-radius: 0 0 5px; }
.edit-list { display: grid; grid-template-rows: 32px 32px 32px; padding-left: 15px; font-size: 15px; }
.edit-list button { justify-content: flex-start; gap: 4px; height: 26px; }
.edit-list .find { width: 40px; text-align: left; }

/* Rulers and document */
.workspace { flex: 1; min-height: 0; display: grid; grid-template: 30px 1fr / 30px 1fr; overflow: hidden; border-bottom: 1px solid #fff; }
.corner { display: flex; align-items: center; justify-content: center; padding: 4px 0 0; border-right: 1px solid #d0d0d0; border-bottom: 1px solid #d0d0d0; }
.hruler { display: flex; justify-content: center; padding-right: 20px; border-bottom: 1px solid #d0d0d0; }
.vruler { padding-left: 4px; border-right: 1px solid #d0d0d0; overflow: hidden; }
.num { font-size: 13px; fill: #555; text-anchor: middle; }
.canvas { display: flex; flex-direction: column; align-items: center; gap: 18px; padding-right: 20px; overflow: hidden; }
.page { flex: none; width: 984px; background: #fff; border: 1px solid #c6c6c6; color: #000; font-family: "Liberation Serif", serif; }
.first { border-top: 0; padding: 0 109px 57px 89px; }
.first figure { margin: 0; }
.shot { display: flex; min-height: 380px; border: solid #e88fae; border-width: 0 1px 1px 0; border-bottom-left-radius: 6px; overflow: hidden; font: 9px/12px Lato, sans-serif; }
.shot aside { display: flex; flex-direction: column; width: 100px; background: #212529; color: #a3a7ab; }
.shot h6 { margin: 13px 0 0 7px; font: inherit; font-size: 8px; color: #6a6f74; }
.shot h6.next { margin-top: 22px; }
.shot p { display: flex; align-items: center; gap: 3px; margin: 14px 0 0 7px; }
.shot p + p { margin-top: 15px; }
.shot p svg { width: 8px; height: 8px; }
.who { margin-top: auto; height: 39px; padding: 7px 5px; background: #343a40; }
.shot-row { flex: 1; height: 33px; margin: 0 76px 0 75px; padding: 4px 74px 0 0; display: flex; justify-content: flex-end; gap: 79px; border-top: 2px solid #2d333d; border-bottom: 1px solid #e4e4e4; }
.shot-row span { height: 22px; border: 1px solid #5c9dfd; border-radius: 2px; line-height: 20px; color: #0d6efd; width: 37px; text-align: center; }
.shot-row .delete { background: #dc3545; border-color: #dc3545; color: #fff; width: 36px; }
figcaption { margin: 8px 0 0 92px; text-align: center; font: italic 21px/26px "Liberation Serif", serif; }
.caret { margin: 7px 0 0 437px; }
.pageno { margin: 53px 0 0 20px; text-align: center; font: bold 22px/26px "Liberation Serif", serif; color: #808080; }
.second { min-height: 400px; }
.second h1 { margin: 105px 0 0; text-align: center; font: bold 26px/32px "Liberation Serif", serif; }

/* Status bar */
.status { height: 26px; display: flex; justify-content: space-between; background: #f4f4f4; font-size: 13px; }
.status-left { display: grid; grid-template-columns: 105px 92px 153px 140px auto; align-items: center; padding-left: 15px; }
.access { gap: 4px; font-weight: 600; }
.status-right { display: flex; align-items: center; }
.focus { gap: 4px; margin-right: 13px; }
.view { width: 50px; height: 26px; }
.view.on { background: #dedede; }
.view.on + .view { margin-right: 4px; }
.zoom { width: 16px; height: 26px; }
.slider { appearance: none; width: 125px; height: 16px; margin: 0 3px; background: linear-gradient(#666, #666) center / 100% 1px no-repeat; }
.slider::-webkit-slider-thumb { appearance: none; width: 6px; height: 14px; background: #555; }
.pct { width: 49px; padding-left: 14px; }

/* Taskbar */
.taskbar { height: 50px; display: flex; align-items: stretch; background: linear-gradient(90deg, #ebe8e4, #e9e9e8 50%, #ede8e4); color: #111; }
.start { width: 60px; }
.tasksearch { display: flex; align-items: center; width: 360px; gap: 15px; padding: 0 10px 0 14px; border: 1px solid #b8b8b8; background: #fff; }
.tasksearch input { font-size: 18px; }
.tasksearch input::placeholder { color: #333; opacity: 1; }
.taskview { width: 63px; }
.taskview svg { margin-right: 2px; }
.apps { display: flex; }
.app { display: flex; align-items: center; justify-content: center; width: 62px; padding: 0; border: 0; background: none; }
.app.run { background: linear-gradient(#e8065f, #e8065f) bottom / 52px 3px no-repeat; }
.app.run.cur { background: linear-gradient(#e8065f, #e8065f) bottom / 62px 3px no-repeat, #f8f7f5; }
.pr { width: 28px; height: 27px; border-radius: 5px; background: #00005b; color: #9999ff; font-size: 16px; font-weight: 600; line-height: 26px; text-align: center; }
.tray { display: flex; align-items: center; gap: 12px; margin-left: auto; margin-right: 5px; border-right: 1px solid #aaa; padding-right: 25px; }
time { width: 80px; margin-left: -3px; text-align: center; font-size: 15px; line-height: 23px; }
.note { position: relative; margin-left: 4px; }
.note span { position: absolute; left: 9px; top: 9px; width: 20px; height: 20px; border: 1px solid #777; border-radius: 50%; background: #d4d4d4; font-size: 13px; line-height: 18px; font-weight: 600; }
```
